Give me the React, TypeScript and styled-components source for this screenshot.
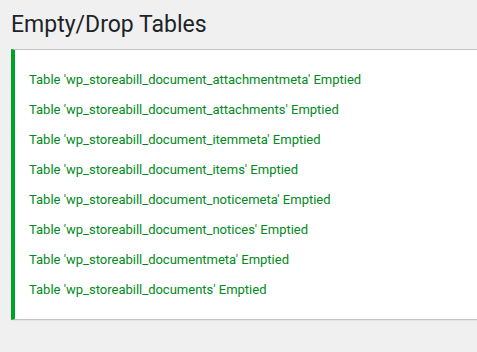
import React from "react";
import styled, { createGlobalStyle } from "styled-components";

const Global = createGlobalStyle`
  html, body { margin: 0; padding: 0; background: #f0f0f1; }
  body { font-family: Roboto, "Noto Sans", sans-serif; overflow: hidden; }
`;

const Page = styled.div`
  padding: 0 0 0 11px;
  min-height: 352px;
  box-sizing: border-box;
`;

const Title = styled.h1`
  margin: 0;
  padding: 10px 0 10px;
  font-size: 23px;
  font-weight: 400;
  line-height: 29px;
  color: #1d2327;
`;

const Notice = styled.div`
  background: #fff;
  border: 1px solid #c3c4c7;
  border-left: 4px solid #00a32a;
  border-right: none;
  box-shadow: 0 1px 1px rgba(0, 0, 0, 0.04);
  padding: 15px 0 14px 14px;
  display: flex;
  flex-direction: column;
`;

const Line = styled.p`
  margin: 0;
  height: 30px;
  line-height: 30px;
  font-size: 13px;
  color: #008a20;
`;

const tables = [
  "wp_storeabill_document_attachmentmeta",
  "wp_storeabill_document_attachments",
  "wp_storeabill_document_itemmeta",
  "wp_storeabill_document_items",
  "wp_storeabill_document_noticemeta",
  "wp_storeabill_document_notices",
  "wp_storeabill_documentmeta",
  "wp_storeabill_documents",
];

export default function App() {
  return (
    <Page>
      <Global />
      <Title>Empty/Drop Tables</Title>
      <Notice>
        {tables.map((t) => (
          <Line key={t}>Table '{t}' Emptied</Line>
        ))}
      </Notice>
    </Page>
  );
}
